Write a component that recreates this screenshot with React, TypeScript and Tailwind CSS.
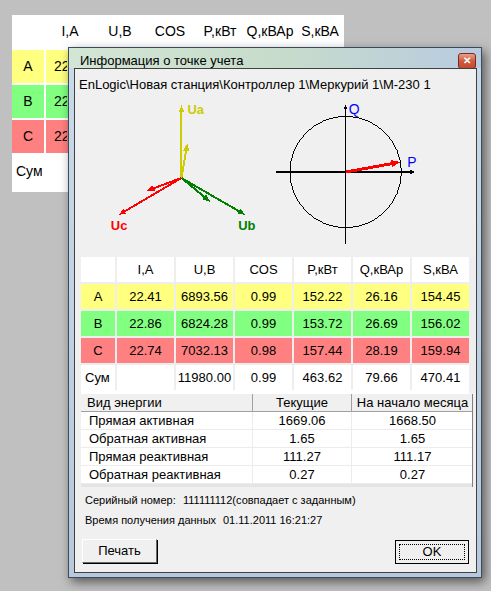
import React from 'react';

type Row = { name: string; bg: string; values: string[] };

const rows: Row[] = [
  { name: 'A', bg: 'bg-[#ffff80]', values: ['22.41', '6893.56', '0.99', '152.22', '26.16', '154.45'] },
  { name: 'B', bg: 'bg-[#80ff80]', values: ['22.86', '6824.28', '0.99', '153.72', '26.69', '156.02'] },
  { name: 'C', bg: 'bg-[#ff8080]', values: ['22.74', '7032.13', '0.98', '157.44', '28.19', '159.94'] },
  { name: 'Сум', bg: 'bg-white', values: ['', '11980.00', '0.99', '463.62', '79.66', '470.41'] },
];

const headers = ['I,A', 'U,B', 'COS', 'P,кВт', 'Q,кВАр', 'S,кВА'];

const energy = [
  ['Прямая активная', '1669.06', '1668.50'],
  ['Обратная активная', '1.65', '1.65'],
  ['Прямая реактивная', '111.27', '111.17'],
  ['Обратная реактивная', '0.27', '0.27'],
];

// стрелка вектора с наконечником
const Arrow = ({ x1, y1, x2, y2, color, w = 2, head = 7 }: { x1: number; y1: number; x2: number; y2: number; color: string; w?: number; head?: number }) => {
  const dx = x2 - x1;
  const dy = y2 - y1;
  const len = Math.hypot(dx, dy);
  const ux = dx / len;
  const uy = dy / len;
  const bx = x2 - ux * head;
  const by = y2 - uy * head;
  const px = -uy * head * 0.4;
  const py = ux * head * 0.4;
  return (
    <g>
      <line x1={x1} y1={y1} x2={bx} y2={by} stroke={color} strokeWidth={w} />
      <polygon points={`${x2},${y2} ${bx + px},${by + py} ${bx - px},${by - py}`} fill={color} />
    </g>
  );
};

const PhaseTable = ({ big }: { big?: boolean }) => {
  const h = big ? 'h-[33px]' : 'h-[25px]';
  return (
    <div
      className={`grid gap-[2px] text-black ${
        big
          ? 'grid-cols-[32px_repeat(6,48px)] bg-white pb-[4px] text-[14px]'
          : 'grid-cols-[34px_repeat(6,57px)] bg-[#eeeeee] text-[13px]'
      }`}
    >
      <div className={`bg-white ${h}`} />
      {headers.map((t) => (
        <div key={t} className={`flex items-center justify-center bg-white ${h}`}>
          {t}
        </div>
      ))}
      {rows.map((r) => (
        <React.Fragment key={r.name}>
          <div
            className={`flex items-center ${r.bg} ${h} ${
              r.name === 'Сум' ? 'justify-start pl-[4px]' : 'justify-center'
            }`}
          >
            {r.name}
          </div>
          {r.values.map((v, i) =>
            big ? (
              // в окне позади видна только часть второй колонки
              <div key={i} className={`${r.bg} ${h}`}>
                {i === 0 && (
                  <div className="flex h-full w-[21px] items-center overflow-hidden whitespace-nowrap pl-[8px]">{v}</div>
                )}
              </div>
            ) : (
              <div key={i} className={`flex items-center justify-center ${r.bg} ${h}`}>
                {v}
              </div>
            )
          )}
        </React.Fragment>
      ))}
    </div>
  );
};

const VectorDiagram = () => (
  <svg width="200" height="158" viewBox="0 0 200 158" shapeRendering="crispEdges">
    <Arrow x1={107} y1={82} x2={107} y2={9} color="#cccc00" />
    <Arrow x1={107} y1={82} x2={113} y2={47} color="#cccc00" head={8} />
    <Arrow x1={107} y1={82} x2={44} y2={119} color="#ff0000" />
    <Arrow x1={107} y1={82} x2={72} y2={95} color="#ff0000" head={8} />
    <Arrow x1={107} y1={82} x2={171} y2={119} color="#008000" />
    <Arrow x1={107} y1={82} x2={136} y2={106} color="#008000" head={8} />
    <text x={113} y={18} fill="#cccc00" fontSize="13" fontWeight="bold" fontFamily="Liberation Sans, Arial, sans-serif">Ua</text>
    <text x={36} y={134} fill="#ff0000" fontSize="13" fontWeight="bold" fontFamily="Liberation Sans, Arial, sans-serif">Uc</text>
    <text x={164} y={134} fill="#008000" fontSize="13" fontWeight="bold" fontFamily="Liberation Sans, Arial, sans-serif">Ub</text>
  </svg>
);

const PowerDiagram = () => (
  <svg width="203" height="158" viewBox="0 0 203 158" shapeRendering="crispEdges">
    <circle cx={72} cy={76} r={56} fill="none" stroke="#000" strokeWidth={1} />
    <Arrow x1={2} y1={76} x2={142} y2={76} color="#000" w={1.5} head={5} />
    <Arrow x1={72} y1={148} x2={72} y2={8} color="#000" w={1.5} head={5} />
    <Arrow x1={72} y1={76} x2={127} y2={66} color="#ff0000" w={3} head={9} />
    <text x={75} y={18} fill="#0000ff" fontSize="14" fontFamily="Liberation Sans, Arial, sans-serif">Q</text>
    <text x={134} y={71} fill="#0000ff" fontSize="14" fontFamily="Liberation Sans, Arial, sans-serif">P</text>
  </svg>
);

export default function App() {
  return (
    <div className="relative h-[591px] w-[491px] overflow-hidden bg-[#c0c0c0] font-['Liberation_Sans',Arial,sans-serif]">
      {/* окно позади */}
      <div className="absolute left-[12px] top-[15px]">
        <PhaseTable big />
      </div>

      {/* диалог */}
      <div className="absolute left-[68px] top-[47px] flex h-[531px] w-[414px] flex-col border border-[#3c4a5a] bg-gradient-to-b from-[#c9dbe9] to-[#b6c9dd] shadow-[3px_4px_10px_rgba(0,0,0,0.55)]">
        <div className="flex h-[20px] items-center justify-between bg-gradient-to-r from-[#d3e6d6] via-[#c8dccb] to-[#b8cbe0] pl-[11px] pr-[5px] pt-[5px]">
          <span className="text-[13px] text-black">Информация о точке учета</span>
          <div className="flex h-[16px] w-[18px] items-center justify-center rounded-[3px] border border-[#7a2a1c] bg-gradient-to-b from-[#e8a08c] via-[#d05a40] to-[#c24a30] text-[10px] font-bold leading-none text-white">
            ✕
          </div>
        </div>
        <div className="ml-[5px] mr-[4px] flex h-[505px] flex-col border border-[#404040] bg-[#f0f0f0] text-black">
          <div className="ml-[4px] mt-[8px] h-[16px] whitespace-nowrap text-[13px] leading-[16px]">
            EnLogic\Новая станция\Контроллер 1\Меркурий 1\М-230 1
          </div>
          <div className="mt-[3px] flex h-[158px]">
            <VectorDiagram />
            <PowerDiagram />
          </div>
          <div className="ml-[6px] mt-[3px]">
            <PhaseTable />
            <div className="h-[4px] w-[388px] bg-white" />
            <div className="w-[392px] border-r border-[#808080] text-[13px]">
              <div className="grid h-[18px] grid-cols-[172px_99px_121px] border-b border-[#a0a0a0] bg-[#f0f0f0]">
                <div className="border-r border-[#a0a0a0] pl-[6px] leading-[17px]">Вид энергии</div>
                <div className="border-r border-[#a0a0a0] text-center leading-[17px]">Текущие</div>
                <div className="text-center leading-[17px]">На начало месяца</div>
              </div>
              {energy.map((e) => (
                <div key={e[0]} className="grid h-[18px] grid-cols-[172px_99px_121px] border-b border-[#ececec] bg-white">
                  <div className="border-r border-[#ececec] pl-[8px] leading-[17px]">{e[0]}</div>
                  <div className="border-r border-[#ececec] text-center leading-[17px]">{e[1]}</div>
                  <div className="text-center leading-[17px]">{e[2]}</div>
                </div>
              ))}
              <div className="h-[3px] bg-[#e4e4e4]" />
            </div>
          </div>
          <div className="ml-[10px] mt-[5px] flex h-[16px] whitespace-nowrap text-[11px] leading-[16px]">
            <span className="w-[98px] shrink-0">Серийный номер:</span>
            <span>111111112(совпадает с заданным)</span>
          </div>
          <div className="ml-[10px] mt-[4px] flex h-[16px] whitespace-nowrap text-[11px] leading-[16px]">
            <span className="w-[138px] shrink-0">Время получения данных</span>
            <span>01.11.2011 16:21:27</span>
          </div>
          <div className="mt-[11px] flex items-start justify-between pl-[7px] pr-[7px]">
            <button className="h-[24px] w-[75px] border border-b-[#696969] border-l-white border-r-[#696969] border-t-white bg-[#f0f0f0] text-[13px] shadow-[1px_1px_0_#000]">
              Печать
            </button>
            <button className="mt-[1px] flex h-[24px] w-[74px] items-center justify-center border border-black bg-[#f0f0f0] p-[3px] text-[13px]">
              <span className="flex h-full w-full items-center justify-center border border-dotted border-black">OK</span>
            </button>
          </div>
        </div>
      </div>
    </div>
  );
}
